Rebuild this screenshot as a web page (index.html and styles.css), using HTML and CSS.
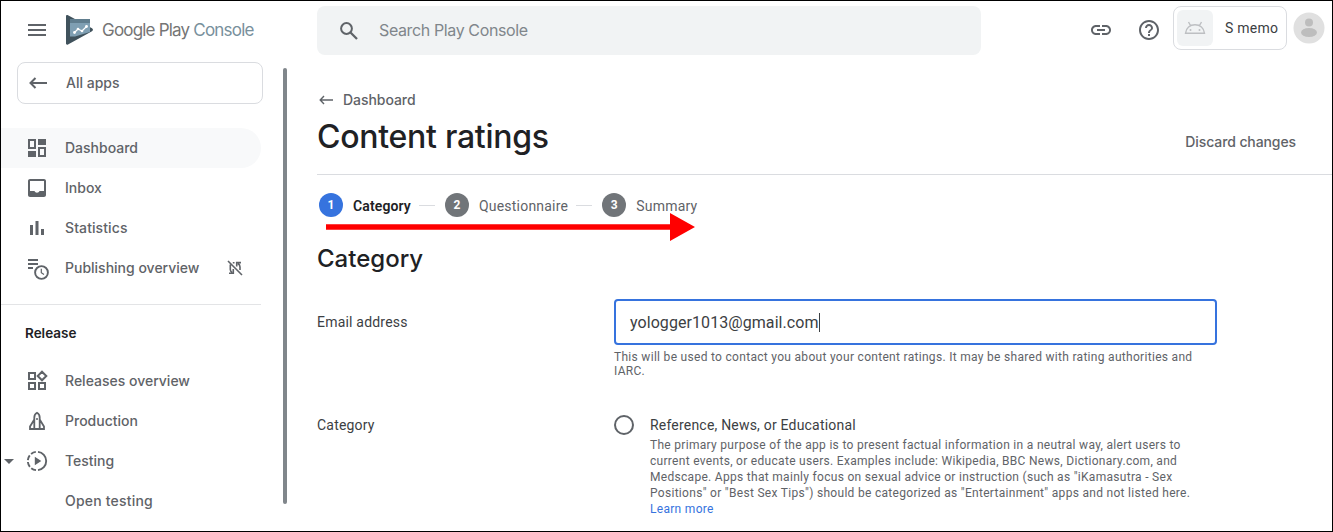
FILE: index.html
```html
<!DOCTYPE html>
<html lang="en">
<head>
<meta charset="utf-8">
<title>Content ratings</title>
<link rel="stylesheet" href="styles.css">
</head>
<body>
<div class="window">
  <div class="side">
    <div class="brand">
      <svg class="menu" width="18" height="12" viewBox="0 0 18 12"><path d="M0 1h18M0 6h18M0 11h18" stroke="#5f6368" stroke-width="2"/></svg>
      <svg class="logo" width="29" height="32" viewBox="0 0 29 32"><path d="M1 2.200C1 1 2 .7 3 1.200L27 14.300c1.300.8 1.300 2.200 0 3L3 30.400C2 31 1 30.500 1 29.500z" fill="#40525c"/><path d="M5 5h20v13L10 22.500H5z" fill="#7f9fb3"/><path d="M5 5h20v4H5z" fill="#607d8e"/><path d="M9.500 18.500l3.500-3.500 4 2 4.500-4.500" fill="none" stroke="#fff" stroke-width="1.200"/><g fill="#fff"><circle cx="9.500" cy="18.500" r="1.400"/><circle cx="13" cy="15" r="1.300"/><circle cx="17" cy="17" r="1.300"/><circle cx="21.500" cy="12.500" r="1.400"/></g></svg>
      <span class="wordmark"><span class="gp">Google Play</span> <span class="console">Console</span></span>
    </div>
    <div class="allapps">
      <svg width="18" height="12" viewBox="0 0 18 12"><path d="M18 6H1.500M6.500 1l-5 5 5 5" fill="none" stroke="#5f6368" stroke-width="2"/></svg>
      <span>All apps</span>
    </div>
    <div class="nav">
      <div class="item active"><svg class="ic" viewBox="0 0 24 24"><path d="M9 5v6H5V5h4m10 8v6h-4v-6h4M11 3H3v10h8V3zm10 8h-8v10h8V11z"/><path d="M13 3h8v6h-8zM3 15h8v6H3z"/></svg><span>Dashboard</span></div>
      <div class="item"><svg class="ic" viewBox="0 0 24 24"><path d="M19 3H5c-1.100 0-2 .9-2 2v14c0 1.100.9 2 2 2h14c1.100 0 2-.9 2-2V5c0-1.100-.9-2-2-2zm0 12h-4.500c-.5 1-1.300 1.700-2.500 1.700S10 16 9.500 15H5V5h14v10z"/></svg><span>Inbox</span></div>
      <div class="item"><svg class="ic" viewBox="0 0 24 24"><path d="M5 9h3v10H5zM10.500 5h3v14h-3zM16 13h3v6h-3z"/></svg><span class="t-stat">Statistics</span></div>
      <div class="item"><svg class="ic" viewBox="0 0 24 24"><path d="M3 3h10v2H3zM3 7h10v2H3zM3 11h5v2H3z"/><circle cx="16.500" cy="16.500" r="6.400" fill="#fff" stroke="#5f6368" stroke-width="1.900"/><path d="M16.300 12.800v4l2.700 1.800" fill="none" stroke="#5f6368" stroke-width="1.200"/></svg><span>Publishing overview</span>
        <svg class="off" width="16" height="16" viewBox="0 0 16 16"><g fill="none" stroke="#5f6368" stroke-width="1.600"><path d="M1 1l14 14M3.300 4.500v5c0 1.300.7 2.200 1.700 3M2 13.200h4.300V9M5.800 2.800h1.700M9.700 6.500V2.600H14M11 3.500c1.400 1 2 2 2 3.500v3"/></g></svg>
      </div>
    </div>
    <div class="nav release">
      <div class="heading">Release</div>
      <div class="item"><svg class="ic" viewBox="0 0 24 24"><g fill="none" stroke="#5f6368" stroke-width="2"><path d="M4 4h6v6H4zM4 14h6v6H4zM14 14h6v6h-6zM17 2.700L21.300 7 17 11.300 12.700 7z"/></g></svg><span>Releases overview</span></div>
      <div class="item"><svg class="ic" viewBox="0 0 24 24"><g fill="none" stroke="#5f6368" stroke-width="1.800"><path d="M9.300 20V8.500c0-2.500 1.200-4 2.700-4.700 1.500.7 2.700 2.200 2.700 4.700V20M9.300 10.500L5 17.500V20h14v-2.500l-4.300-7"/></g><circle cx="12" cy="10" r="1"/></svg><span>Production</span></div>
      <div class="item"><span class="caret"></span><svg class="ic" viewBox="0 0 24 24"><path d="M13 2.900a9.150 9.150 0 0 1 0 18.200" fill="none" stroke="#5f6368" stroke-width="1.900"/><path d="M11 21.100a9.150 9.150 0 0 1 0-18.200" fill="none" stroke="#5f6368" stroke-width="1.900" stroke-dasharray="5.200 1.900"/><path d="M9.800 7.700v8.600l6.500-4.300z"/></svg><span>Testing</span></div>
      <div class="item"><span class="ic"></span><span class="t-open">Open testing</span></div>
    </div>
  </div>
  <div class="rail"><div class="thumb"></div></div>
  <div class="main">
    <div class="top">
      <div class="search">
        <svg width="18" height="18" viewBox="0 0 18 18"><circle cx="6.500" cy="6.500" r="5.400" fill="none" stroke="#5f6368" stroke-width="2"/><path d="M10.500 10.500l6.500 6.500" stroke="#5f6368" stroke-width="2.300"/></svg>
        <span class="t-search">Search Play Console</span>
      </div>
      <svg class="link" width="24" height="24" viewBox="0 0 24 24"><path fill="#5f6368" d="M3.900 12c0-1.710 1.390-3.100 3.100-3.100h4V7H7c-2.760 0-5 2.240-5 5s2.240 5 5 5h4v-1.900H7c-1.710 0-3.100-1.390-3.100-3.100zM8 13h8v-2H8v2zm9-6h-4v1.900h4c1.710 0 3.100 1.390 3.100 3.100s-1.390 3.100-3.100 3.100h-4V17h4c2.760 0 5-2.240 5-5s-2.240-5-5-5z"/></svg>
      <svg class="help" width="24" height="24" viewBox="0 0 24 24"><path fill="#5f6368" d="M11 18h2v-2h-2v2zm1-16C6.480 2 2 6.480 2 12s4.480 10 10 10 10-4.480 10-10S17.520 2 12 2zm0 18c-4.410 0-8-3.590-8-8s3.590-8 8-8 8 3.590 8 8-3.590 8-8 8zm0-14c-2.210 0-4 1.790-4 4h2c0-1.100.9-2 2-2s2 .9 2 2c0 2-3 1.750-3 5h2c0-2.250 3-2.500 3-5 0-2.210-1.790-4-4-4z"/></svg>
      <div class="app">
        <div class="appicon"><svg width="22" height="14" viewBox="0 0 22 14"><g fill="none" stroke="#bdbfc2" stroke-width="1.400"><path d="M1.500 12.300C2 7 6 3.800 11 3.800s9 3.200 9.500 8.500zM4.500 1l2.300 4M17.500 1l-2.300 4"/></g><circle cx="6.500" cy="9" r="1" fill="#bdbfc2"/><circle cx="15.500" cy="9" r="1" fill="#bdbfc2"/></svg></div>
        <span class="t-memo">S memo</span>
      </div>
      <svg class="avatar" width="32" height="32" viewBox="0 0 32 32"><circle cx="16" cy="16" r="15.500" fill="#e0e0e0"/><circle cx="16" cy="10.500" r="4" fill="#bdbdbd"/><ellipse cx="16" cy="20.500" rx="8" ry="4.600" fill="#bdbdbd"/></svg>
    </div>
    <div class="crumb"><svg width="14" height="10" viewBox="0 0 14 10"><path d="M14 5H1.500M5 1L1.200 5 5 9" fill="none" stroke="#5f6368" stroke-width="1.400"/></svg><span>Dashboard</span></div>
    <div class="titlebar"><h1>Content ratings</h1><span class="discard">Discard changes</span></div>
    <div class="steps">
      <span class="num on">1</span><span class="lbl cur">Category</span><i class="dash"></i>
      <span class="num">2</span><span class="lbl">Questionnaire</span><i class="dash"></i>
      <span class="num">3</span><span class="lbl">Summary</span>
      <svg class="arrow" width="370" height="30" viewBox="0 0 370 30"><path d="M0 12.300h344V1l25 14-25 14V17.700H0z" fill="#f00"/></svg>
    </div>
    <h2>Category</h2>
    <div class="row email">
      <div class="label">Email address</div>
      <div class="field">
        <div class="input"><span>yologger1013@gmail.com</span><i class="cursor"></i></div>
        <p class="hint">This will be used to contact you about your content ratings. It may be shared with rating authorities and<br>IARC.</p>
      </div>
    </div>
    <div class="row">
      <div class="label">Category</div>
      <div class="option">
        <span class="radio"></span>
        <div class="copy">
          <div class="name">Reference, News, or Educational</div>
          <p>The primary purpose of the app is to present factual information in a neutral way, alert users to<br>current events, or educate users. Examples include: Wikipedia, BBC News, Dictionary.com, and<br>Medscape. Apps that mainly focus on sexual advice or instruction (such as "iKamasutra - Sex<br>Positions" or "Best Sex Tips") should be categorized as "Entertainment" apps and not listed here.<br><a>Learn more</a></p>
        </div>
      </div>
    </div>
  </div>
</div>
</body>
</html>
```
FILE: styles.css
```css
* { box-sizing: border-box; }
body { margin: 0; background: #fff; font-family: Roboto, sans-serif; color: #3c4043; }
h1, h2, p { margin: 0; }
svg { display: block; flex: none; }
.window { width: 1333px; height: 532px; border: 1px solid #000; display: flex; overflow: hidden; white-space: nowrap; }
.side { width: 262px; flex: none; font: 500 14px/20px Inter, sans-serif; color: #5f6368; }
.brand { height: 61px; padding: 3px 0 7px 27px; display: flex; align-items: center; }
.logo { margin-left: 19px; }
.wordmark { margin-left: 8px; font: 400 17px/24px Inter, sans-serif; color: #757575; letter-spacing: -0.8px; }
.console { color: #78909c; }
.allapps { width: 246px; height: 42px; margin-left: 16px; border: 1px solid #dadce0; border-radius: 8px; display: flex; align-items: center; padding-left: 11px; gap: 19px; }
.nav { margin-top: 24px; }
.item { height: 40px; width: 260px; padding-left: 24px; display: flex; align-items: center; position: relative; }
.item > span:not(.ic):not(.caret) { margin-left: 16px; }
.active { background: #f8f9fa; border-radius: 0 20px 20px 0; }
.ic { width: 24px; height: 24px; fill: #5f6368; flex: none; overflow: visible; }
.off { margin-left: 28px; }
.t-stat { letter-spacing: .1px; }
.t-open { letter-spacing: .2px; }
.release { margin-top: 16px; border-top: 1px solid #e3e4e6; width: 260px; padding-top: 18px; }
.heading { padding-left: 24px; color: #202124; font-weight: 600; font-size: 13.5px; margin-bottom: 18px; }
.caret { position: absolute; left: 3px; top: 18px; border: 5px solid transparent; border-top-color: #5f6368; border-bottom: 0; }
.rail { width: 54px; padding: 67px 0 0 20px; flex: none; }
.thumb { width: 4px; height: 436px; background: #80868b; border-radius: 2px; }
.main { flex: 1; }
.top { height: 89px; padding-top: 5px; display: flex; align-items: flex-start; }
.search { width: 664px; height: 49px; background: #f1f3f4; border-radius: 8px; display: flex; align-items: center; padding-left: 23px; gap: 21px; font: 400 16px/24px Inter, sans-serif; letter-spacing: -.38px; color: #80868b; }
.t-search { margin-top: -2px; }
.link { margin: 12px 0 0 108px; }
.help { margin: 12px 0 0 24px; }
.app { width: 114px; height: 44px; margin-left: 12px; border: 1px solid #dadce0; border-radius: 8px; display: flex; align-items: center; padding-left: 3px; font: 400 14px/20px Roboto, sans-serif; letter-spacing: .25px; }
.t-memo { margin-top: -1px; }
.appicon { width: 36px; height: 36px; border-radius: 6px; background: #f1f3f4; display: flex; align-items: center; justify-content: center; margin-right: 12px; }
.avatar { margin: 6px 0 0 6px; }
.crumb { height: 20px; display: flex; align-items: center; padding-left: 2px; gap: 10px; font: 500 14px/20px Inter, sans-serif; letter-spacing: -.05px; color: #5f6368; }
.titlebar { height: 65px; border-bottom: 1px solid #dadce0; padding-right: 36px; display: flex; justify-content: space-between; align-items: flex-start; color: #5f6368; font: 500 14px/20px Inter, sans-serif; letter-spacing: -.1px; }
.titlebar h1 { font: 500 32px/40px Inter, sans-serif; letter-spacing: -.27px; color: #202124; margin-top: 7px; }
.discard { margin-top: 22px; }
.steps { position: relative; height: 60px; display: flex; align-items: center; padding-left: 2px; font-size: 14px; color: #5f6368; }
.num { width: 24px; height: 24px; border-radius: 50%; background: #717579; color: #fff; font: 700 12px/24px Roboto, sans-serif; text-align: center; }
.on { background: #3673de; }
.lbl { margin-left: 10px; line-height: 20px; padding-top: 1px; letter-spacing: .22px; }
.cur { color: #202124; font-weight: 600; letter-spacing: .12px; }
.dash { width: 16px; height: 1px; background: #dadce0; margin: 0 10px 0 8px; }
.arrow { position: absolute; left: 9px; top: 37px; }
h2 { font: 500 24px/32px Inter, sans-serif; color: #202124; margin-top: 8px; }
.row { display: flex; }
.label { width: 297px; flex: none; font-size: 14px; line-height: 20px; letter-spacing: .2px; }
.email { margin-top: 24px; height: 116px; }
.email .label { padding-top: 13px; }
.field { width: 603px; }
.input { height: 46px; border: 2px solid #3673de; border-radius: 4px; display: flex; align-items: center; padding-left: 14px; font-size: 16px; letter-spacing: .07px; }
.cursor { width: 1px; height: 19px; background: #3c4043; }
.hint { margin-top: 5px; font-size: 12px; line-height: 14px; letter-spacing: .3px; color: #5f6368; }
.option { display: flex; }
.radio { width: 20px; height: 20px; border: 2px solid #5f6368; border-radius: 50%; margin-right: 16px; }
.name { font-size: 14px; line-height: 20px; letter-spacing: .2px; margin-bottom: 2px; }
.copy p { font-size: 12px; line-height: 16px; letter-spacing: .3px; color: #5f6368; }
.copy a { color: #3673de; }
```
